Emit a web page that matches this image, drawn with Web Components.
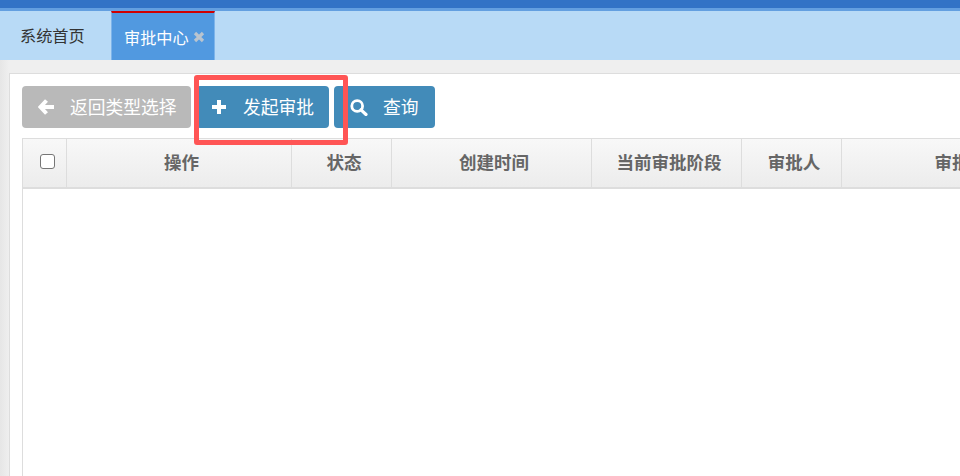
<!DOCTYPE html>
<html lang="zh"><head><meta charset="utf-8"><style>
html,body{margin:0;height:476px;overflow:hidden;background:#eee;font-family:"Liberation Sans","Noto Sans CJK SC",sans-serif}
</style></head><body>
<app-shell>
  <tab-bar slot="tabs">
    <tab-item>系统首页</tab-item>
    <tab-item active closable>审批中心</tab-item>
  </tab-bar>
  <content-panel>
    <tool-bar>
      <ui-button kind="back" icon="back" style="--w:169px;--iw:32px;--pl:16px">返回类型选择</ui-button>
      <ui-button icon="plus" style="--w:133px;--iw:31px;--pl:16px">发起审批</ui-button>
      <ui-button icon="search" style="--w:101px;--iw:33px;--pl:16px">查询</ui-button>
    </tool-bar>
    <data-table></data-table>
  </content-panel>
  <mark-box></mark-box>
</app-shell>
<script>
function def(name,html){customElements.define(name,class extends HTMLElement{constructor(){super();this.attachShadow({mode:'open'}).innerHTML=html;}})}
def('app-shell',`<style>:host{display:block;position:relative;width:960px;height:476px;overflow:hidden;background:linear-gradient(90deg,#e6e6e6 0,#efefef 9px)}
.top{height:8px;background:#3273c6;border-bottom:3px solid #639fe0}
.body{padding:13px 0 0 9px}</style>
<div class="top"></div><slot name="tabs"></slot><div class="body"><slot></slot></div>`);
def('tab-bar',`<style>:host{display:flex;height:49px;background:#b8daf6;font-size:16.200px}</style><slot></slot>`);
const X=`<svg width="12" height="12" viewBox="0 0 12 12" style="margin-left:4px"><path d="M2 2l8 8M10 2l-8 8" stroke="#b9c4cf" stroke-width="3.200"/></svg>`;
customElements.define('tab-item',class extends HTMLElement{constructor(){super();const a=this.hasAttribute('active');this.attachShadow({mode:'open'}).innerHTML=`<style>:host{display:flex;align-items:center;box-sizing:border-box;height:49px;color:#333;padding:0 0 1px 20px;width:111px}
:host([active]){width:104px;padding:0 0 0 12px;background:#5199e0;color:#fff;border-top:2px solid #d00000;border-left:1px solid #7db4ea;border-right:1px solid #7db4ea}</style><span class="t"><slot></slot></span>${a?X:''}`}});
def('content-panel',`<style>:host{display:block;box-sizing:border-box;width:960px;height:420px;background:#fff;border:1px solid #ddd;border-right:0;padding:12px 0 0 12px}</style><slot></slot>`);
def('tool-bar',`<style>:host{display:flex;gap:5px;height:42px;margin-bottom:10px}</style><slot></slot>`);
const I={back:`<svg width="17" height="16" viewBox="0 0 17 16"><path d="M8.500 1.500 2.500 8l6 6.500M3 8H16" fill="none" stroke="#fff" stroke-width="4"/></svg>`,
plus:`<svg width="14" height="14" viewBox="0 0 14 14"><path d="M7 0v14M0 7h14" stroke="#fff" stroke-width="4"/></svg>`,
search:`<svg width="18" height="17" viewBox="0 0 18 17"><circle cx="7.200" cy="7" r="5.400" fill="none" stroke="#fff" stroke-width="2.800"/><path d="M11 10.800 16 15.500" stroke="#fff" stroke-width="3.200" stroke-linecap="round"/></svg>`};
customElements.define('ui-button',class extends HTMLElement{constructor(){super();const ic=this.getAttribute('icon');const back=this.getAttribute('kind')==='back';this.attachShadow({mode:'open'}).innerHTML=`<style>:host{display:flex;align-items:center;box-sizing:border-box;height:42px;width:var(--w);border-radius:4px;background:${back?'#b9b9b9':'#428bb9'};color:#fff;font-size:17.750px;padding-left:var(--pl)}
.i{display:flex;width:var(--iw);flex:none}.t{margin-bottom:3px;white-space:nowrap}</style><span class="i">${I[ic]}</span><span class="t"><slot></slot></span>`}});
const cols=[['',44],['操作',225],['状态',100],['创建时间',200],['当前审批阶段',150],['审批人',100],['审批意见',251]];
def('data-table',`<style>:host{display:block;box-sizing:border-box;width:1100px;height:340px;border:1px solid #ddd;border-right:0;background:#fff}
.h{display:flex;height:50px;box-sizing:border-box;border-bottom:2px solid #ddd;background:linear-gradient(#f8f8f8,#ececec)}
.c{box-sizing:border-box;display:flex;align-items:center;justify-content:center;border-right:1px solid #ddd;font-size:17.500px;font-weight:700;color:#666;flex:none;padding:0 0 3px 5px}
input{width:15px;height:15px;margin:0 0 0 1px;appearance:none;border:1.500px solid #767676;border-radius:3px;background:#fff;box-sizing:border-box}</style>
<div class="h">${cols.map(([t,w],i)=>`<div class="c" style="width:${w}px">${i?t:'<input type="checkbox">'}</div>`).join('')}</div>`);
def('mark-box',`<style>:host{position:absolute;left:194px;top:75px;width:154px;height:70px;box-sizing:border-box;border:5px solid #ff5555;border-radius:3px}</style>`);
</script>
</body></html>
